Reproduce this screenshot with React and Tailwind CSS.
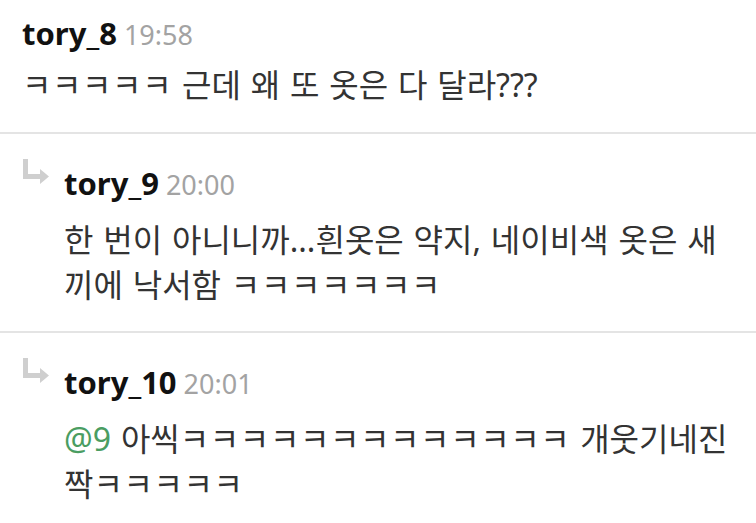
import React from 'react';

const font = { fontFamily: '"Noto Sans", "Noto Sans CJK KR", sans-serif' };

const ReplyArrow = () => (
  <svg width="28" height="28" viewBox="0 0 28 28" className="shrink-0">
    <path d="M3.5 1 V18.5 H19" fill="none" stroke="#cfcfcf" strokeWidth="5" />
    <path d="M18 11 L27 18.5 L18 26 Z" fill="#cfcfcf" />
  </svg>
);

const K = ({ n }) => <span className="tracking-[0.6px]">{'ㅋ'.repeat(n)}</span>;

const Header = ({ name, time }) => (
  <div className="flex items-baseline gap-[7px] h-[40px] leading-[40px]">
    <span className="text-[31px] font-bold text-[#111]">{name}</span>
    <span className="text-[27px] text-[#a3a3a3]">{time}</span>
  </div>
);

const Comment = ({ name, time, children }) => (
  <div className="pl-[22px] pt-[13px] pb-[24px] border-b-2 border-[#e4e4e4]">
    <Header name={name} time={time} />
    <div className="mt-[9px] text-[32px] leading-[46px] text-[#333] [word-spacing:1.5px] whitespace-nowrap">{children}</div>
  </div>
);

const Reply = ({ name, time, children }) => (
  <div className="flex pl-[22px] pt-[24px] pb-[24px] border-b-2 border-[#e4e4e4]">
    <div className="w-[42px]">
      <ReplyArrow />
    </div>
    <div className="flex-1 pt-[5px]">
      <Header name={name} time={time} />
      <div className="mt-[14px] text-[32px] leading-[45px] text-[#333] [word-spacing:1.5px] whitespace-nowrap">{children}</div>
    </div>
  </div>
);

export default function App() {
  return (
    <div className="w-[756px] h-[523px] overflow-hidden bg-white" style={font}>
      <Comment name="tory_8" time="19:58">
        <K n={5} /> 근데 왜 또 옷은 다 달라???
      </Comment>
      <Reply name="tory_9" time="20:00">
        한 번이 아니니까...흰옷은 약지, 네이비색 옷은 새
        <br />
        끼에 낙서함 <K n={7} />
      </Reply>
      <Reply name="tory_10" time="20:01">
        <span className="text-[#4a9d62]">@9</span> 아씩<K n={13} /> 개웃기네진
        <br />
        짝<K n={5} />
      </Reply>
    </div>
  );
}
